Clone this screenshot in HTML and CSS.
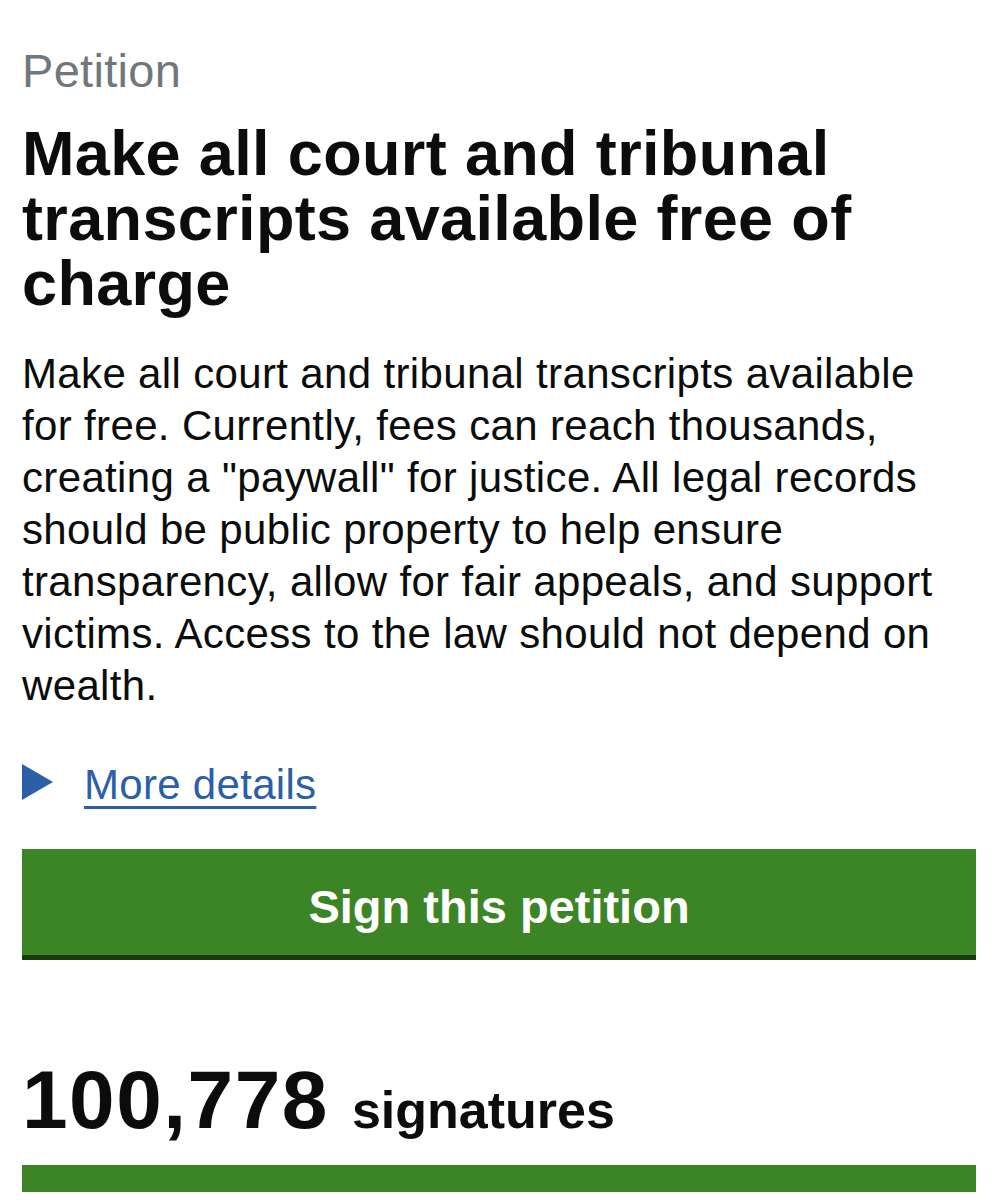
FILE: index.html
```html
<!DOCTYPE html>
<html lang="en">
<head>
<meta charset="utf-8">
<title>Petition</title>
<link rel="stylesheet" href="styles.css">
</head>
<body>
<main class="page">
  <div class="kicker">Petition</div>
  <h1 class="title">Make all court and tribunal transcripts available free of charge</h1>
  <p class="summary">Make all court and tribunal transcripts available for free. Currently, fees can reach thousands, creating a "paywall" for justice. All legal records should be public property to help ensure transparency, allow for fair appeals, and support victims. Access to the law should not depend on wealth.</p>
  <div class="details">
    <svg class="details-arrow" width="31" height="36" viewBox="0 0 31 36" aria-hidden="true"><polygon points="0,0 31,18 0,36" fill="#2b5fa8"/></svg>
    <a class="details-link" href="#">More details</a>
  </div>
  <a class="sign-button" href="#">Sign this petition</a>
  <p class="count"><span class="count-num">100,778</span><span class="count-label">signatures</span></p>
  <div class="progress"></div>
</main>
</body>
</html>
```

FILE: styles.css
```css
html, body {
  margin: 0;
  padding: 0;
  background: #ffffff;
}

body {
  font-family: "Liberation Sans", Arial, Helvetica, sans-serif;
  color: #0b0c0c;
}

.page {
  padding: 44px 22px 0 22px;
}

.kicker {
  font-size: 47px;
  line-height: 54px;
  letter-spacing: 0.3px;
  color: #6f777b;
}

.title {
  margin: 23px 0 0 0;
  font-size: 63px;
  line-height: 65px;
  letter-spacing: 0.35px;
  font-weight: 700;
}

.summary {
  margin: 32px 0 0 0;
  max-width: 940px;
  font-size: 42px;
  line-height: 52px;
  letter-spacing: 0.35px;
}

.details {
  margin-top: 47px;
  display: flex;
  align-items: center;
  gap: 31px;
  font-size: 42px;
  line-height: 52px;
  letter-spacing: 0.3px;
}

.details-arrow {
  display: block;
  margin-top: -7px;
}

.details-link {
  color: #2b5fa8;
  text-decoration: underline;
  text-decoration-thickness: 3px;
  text-underline-offset: 7px;
}

.sign-button {
  display: block;
  margin-top: 38px;
  height: 96px;
  padding-top: 10px;
  line-height: 96px;
  background: #3c8527;
  box-shadow: 0 5px 0 #173b0d;
  color: #ffffff;
  text-align: center;
  text-decoration: none;
  font-size: 47px;
  font-weight: 700;
}

.count {
  margin: 100px 0 0 0;
  font-size: 82px;
  line-height: 90px;
  font-weight: 700;
}

.count-num {
  letter-spacing: 1.5px;
}

.count-label {
  font-size: 52px;
  line-height: 1;
  margin-left: 23px;
}

.progress {
  margin-top: 20px;
  height: 27px;
  background: #3c8527;
}
```
